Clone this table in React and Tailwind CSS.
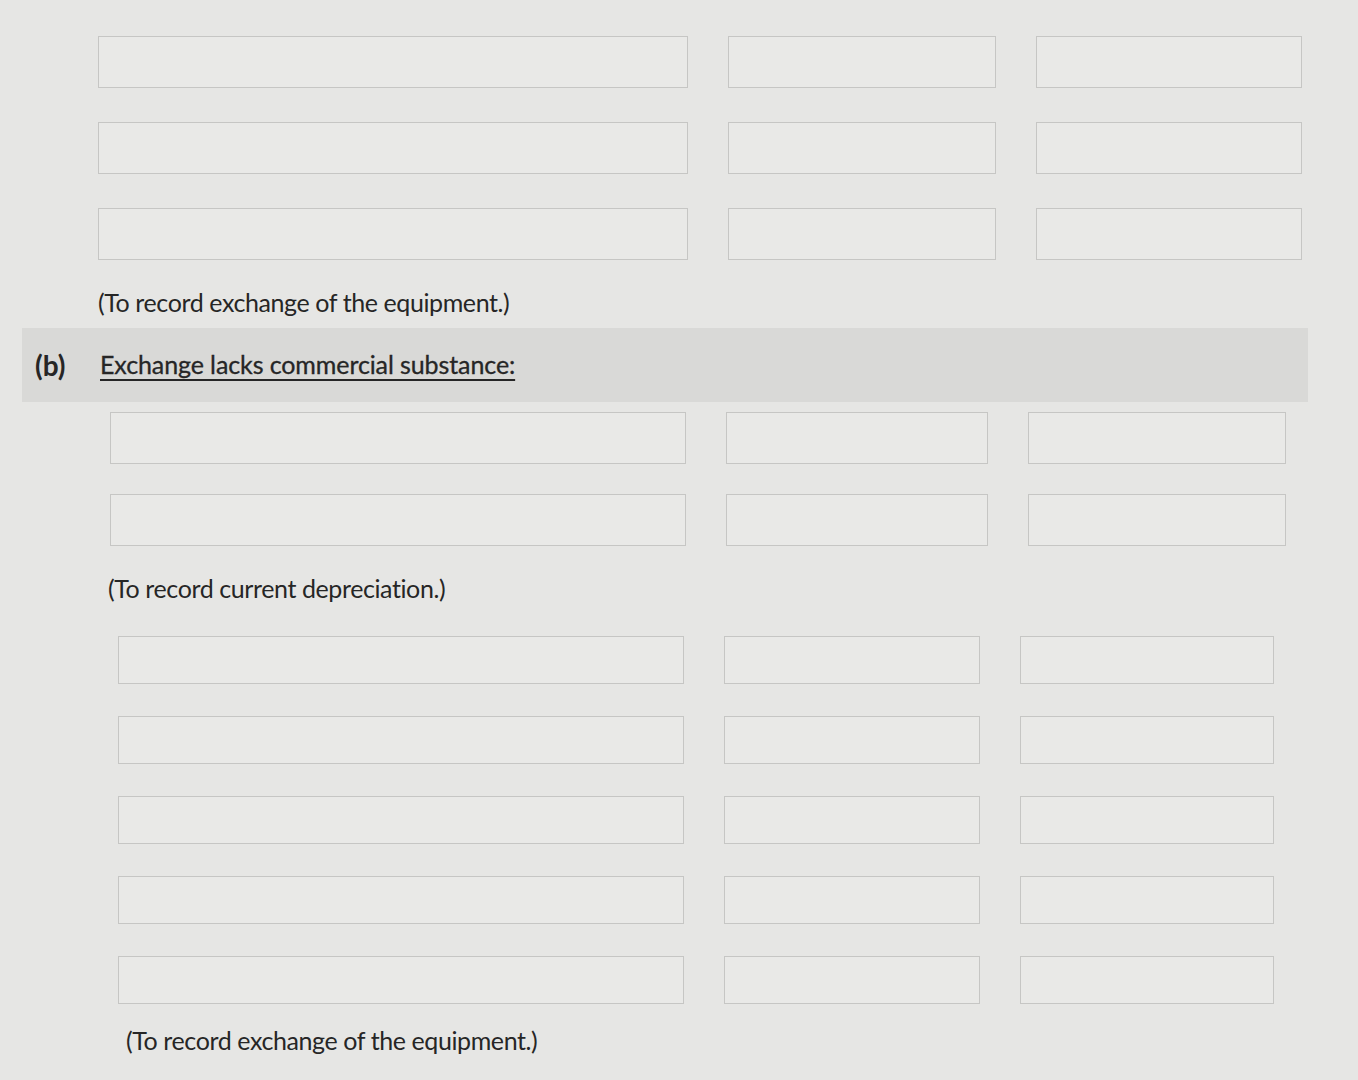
import React from "react";

function Row({ h, a, d, c }) {
  return (
    <div className="flex">
      <div className={`${a} ${h} border border-[#c6c6c4] bg-[#e9e9e7]`} />
      <div className={`ml-[40px] ${d} ${h} border border-[#c6c6c4] bg-[#e9e9e7]`} />
      <div className={`ml-[40px] ${c} ${h} border border-[#c6c6c4] bg-[#e9e9e7]`} />
    </div>
  );
}

export default function App() {
  const top = { h: "h-[52px]", a: "w-[590px]", d: "w-[268px]", c: "w-[266px]" };
  const mid = { h: "h-[52px]", a: "w-[576px]", d: "w-[262px]", c: "w-[258px]" };
  const bot = { h: "h-[48px]", a: "w-[566px]", d: "w-[256px]", c: "w-[254px]" };
  return (
    <div
      className="w-[1358px] h-[1080px] overflow-hidden bg-[#e6e6e4] text-[#262626]"
      style={{ fontFamily: "Lato, 'Open Sans', sans-serif" }}
    >
      <div className="pl-[98px] pt-[36px] flex flex-col gap-[34px]">
        <Row {...top} />
        <Row {...top} />
        <Row {...top} />
      </div>
      <div className="pl-[98px] pt-[27px] text-[25px] leading-[30px] tracking-[-0.4px]">
        (To record exchange of the equipment.)
      </div>
      <div className="mt-[11px] ml-[22px] w-[1286px] h-[74px] bg-[#d9d9d7] flex items-center pl-[13px] text-[25px]">
        <span className="font-bold text-[28px] w-[65px]">(b)</span>
        <span className="underline underline-offset-[5px] decoration-[1.5px] tracking-[-0.1px] [-webkit-text-stroke:0.3px_#262626]">
          Exchange lacks commercial substance:
        </span>
      </div>
      <div className="pl-[110px] pt-[10px] flex flex-col gap-[30px]">
        <Row {...mid} />
        <Row {...mid} />
      </div>
      <div className="pl-[108px] pt-[27px] text-[25px] leading-[30px] tracking-[-0.4px]">
        (To record current depreciation.)
      </div>
      <div className="pl-[118px] pt-[33px] flex flex-col gap-[32px]">
        <Row {...bot} />
        <Row {...bot} />
        <Row {...bot} />
        <Row {...bot} />
        <Row {...bot} />
      </div>
      <div className="pl-[126px] pt-[21px] text-[25px] leading-[30px] tracking-[-0.4px]">
        (To record exchange of the equipment.)
      </div>
    </div>
  );
}
